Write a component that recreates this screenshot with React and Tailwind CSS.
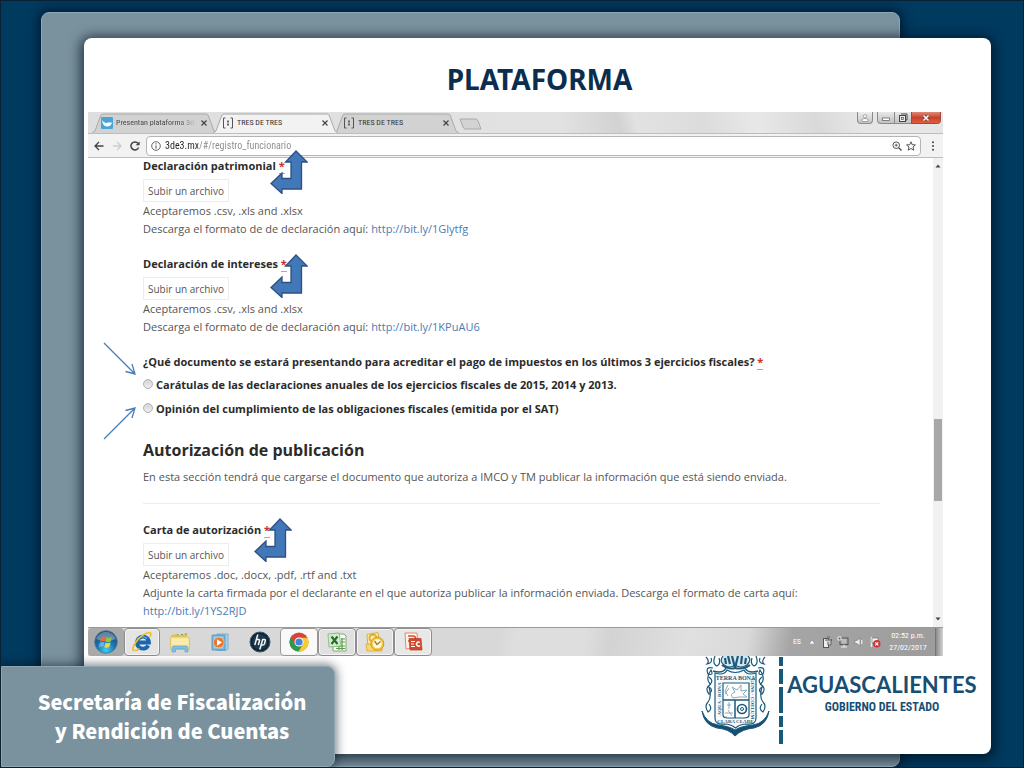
import React from "react";

const TabShape = ({ fill }) => (
  <svg className="absolute inset-0 h-full w-full" viewBox="0 0 126 20" preserveAspectRatio="none" aria-hidden="true">
    <path d="M0 20 L3 18 L9 2 L11 1 H115 L117 2 L123 18 L126 20" fill={fill} stroke="#a9a9a9" strokeWidth="1" />
  </svg>
);

const DocIcon = () => (
  <svg className="h-3 w-3 shrink-0" viewBox="0 0 12 12" fill="none" stroke="#555" aria-hidden="true">
    <path d="M3.5 1 H1.5 V11 H3.5 M8.5 1 H10.5 V11 H8.5" strokeWidth="1" />
    <path d="M6 3.5 V8.5" strokeWidth="2" stroke="#666" strokeDasharray="2 1" />
  </svg>
);

const BirdIcon = () => (
  <svg className="h-3 w-3 shrink-0" viewBox="0 0 12 12" aria-hidden="true">
    <rect width="12" height="12" rx="1" fill="#49a5d6" />
    <path d="M1 3 Q2.500 6 5 6 L7 5.500 L11 5.500 Q10 9.500 6 9.500 Q1.500 9 1 3Z" fill="#fff" />
  </svg>
);

function Tab({ icon, title, active, width, faded }) {
  return (
    <div className={`relative -mr-1 flex h-5 shrink-0 items-center ${width} ${active ? "z-10" : ""}`}>
      <TabShape fill={active ? "#f2f2f2" : "#d2d2d2"} />
      <button
        type="button"
        role="tab"
        aria-selected={active}
        className="relative flex min-w-0 flex-1 items-center gap-[3px] pl-[9px] text-left"
      >
        {icon}
        <span
          className={`whitespace-nowrap text-[8px] leading-3 ${
            faded
              ? "bg-[linear-gradient(90deg,#444_80%,#bbb)] bg-clip-text text-transparent"
              : "text-[#333]"
          }`}
        >
          {title}
        </span>
      </button>
      <button type="button" aria-label={`Cerrar ${title}`} className="relative mr-2 flex h-3 w-2.5 items-center justify-center">
        <svg className="h-1.5 w-1.5" viewBox="0 0 6 6" stroke="#444" strokeWidth="1.2" aria-hidden="true">
          <path d="M0.5 0.5 L5.5 5.5 M5.5 0.5 L0.5 5.5" />
        </svg>
      </button>
    </div>
  );
}

function WindowControls() {
  return (
    <div className="mr-0.5 ml-auto flex items-start">
      <button type="button" aria-label="Usuario" className="mr-1 flex h-3 w-4 items-center justify-center rounded-b-sm border border-t-0 border-[#8b8b8b] bg-gradient-to-b from-[#eee] to-[#c6c6c6]">
        <svg className="h-2 w-2" viewBox="0 0 8 8" fill="#fff" stroke="#888" strokeWidth="0.7" aria-hidden="true">
          <circle cx="4" cy="2.2" r="1.6" /><path d="M1 7.5 V5.5 L3 4.5 H5 L7 5.5 V7.5Z" />
        </svg>
      </button>
      <button type="button" aria-label="Minimizar" className="flex h-3 w-[18px] items-center justify-center rounded-bl-sm border border-t-0 border-[#8b8b8b] bg-gradient-to-b from-[#e8e8e8] to-[#c2c2c2]">
        <svg className="h-2 w-2" viewBox="0 0 8 8" aria-hidden="true"><rect x="0.5" y="4" width="7" height="2.5" fill="#fff" stroke="#555" strokeWidth="0.7" /></svg>
      </button>
      <button type="button" aria-label="Restaurar" className="flex h-3 w-4 items-center justify-center border-b border-[#8b8b8b] bg-gradient-to-b from-[#e8e8e8] to-[#c2c2c2]">
        <svg className="h-2.5 w-2.5" viewBox="0 0 10 10" fill="#eee" stroke="#444" strokeWidth="1" aria-hidden="true">
          <path d="M3 1 H9 V7 H7" /><rect x="1.5" y="2.5" width="6" height="6" /><rect x="3.5" y="4.5" width="2" height="2" fill="#fff" strokeWidth="0.7" />
        </svg>
      </button>
      <button type="button" aria-label="Cerrar" className="flex h-3 w-[30px] items-center justify-center rounded-br-sm border border-t-0 border-[#a04a3b] bg-gradient-to-b from-[#dc8a78] via-[#c9412a] to-[#de5e41]">
        <svg className="h-2 w-2" viewBox="0 0 8 8" aria-hidden="true">
          <path d="M1.5 1.5 L6.5 6.5 M6.5 1.5 L1.5 6.5" stroke="#6b2a20" strokeWidth="2.8" /><path d="M1.5 1.5 L6.5 6.5 M6.5 1.5 L1.5 6.5" stroke="#fff" strokeWidth="1.7" />
        </svg>
      </button>
    </div>
  );
}

function Toolbar() {
  return (
    <div className="flex h-[25px] items-center border-y border-[#bdbdbd] bg-[#f2f2f2] pr-1.5 pl-1.5">
      <button type="button" aria-label="Atrás" className="mr-2">
        <svg className="h-2.5 w-2.5" viewBox="0 0 10 10" fill="none" stroke="#444" strokeWidth="1.3" aria-hidden="true"><path d="M9.5 5 H1 M5 1 L1 5 L5 9" /></svg>
      </button>
      <button type="button" aria-label="Adelante" className="mr-2">
        <svg className="h-2.5 w-2.5" viewBox="0 0 10 10" fill="none" stroke="#cdcdcd" strokeWidth="1.3" aria-hidden="true"><path d="M1 5 H9 M5 1 L9 5 L5 9" /></svg>
      </button>
      <button type="button" aria-label="Recargar" className="mr-1.5">
        <svg className="h-2.5 w-2.5" viewBox="0 0 10 10" fill="none" stroke="#444" strokeWidth="1.5" aria-hidden="true"><path d="M8.6 6.5 A4 4 0 1 1 8 2.3" /><path d="M9.6 0.4 V4.3 H5.6Z" fill="#444" stroke="none" /></svg>
      </button>
      <div className="flex h-5 flex-1 items-center gap-1 rounded-sm border border-[#b5b5b5] bg-white px-1">
        <svg className="h-2.5 w-2.5" viewBox="0 0 10 10" fill="none" stroke="#555" aria-hidden="true"><circle cx="5" cy="5" r="4.3" strokeWidth="0.9" /><path d="M5 4.4 V7.6 M5 2.3 V3.4" strokeWidth="1.1" /></svg>
        <input
          aria-label="Dirección"
          defaultValue="3de3.mx/#/registro_funcionario"
          className="min-w-0 flex-1 bg-[linear-gradient(90deg,#222_33px,#8a8a8a_33px)] bg-clip-text text-[10px] leading-4 text-transparent outline-none"
        />
        <svg className="h-2.5 w-2.5" viewBox="0 0 10 10" fill="none" stroke="#555" aria-hidden="true"><circle cx="4.2" cy="4.2" r="3.3" /><path d="M6.7 6.7 L9.5 9.5" strokeWidth="1.4" /><path d="M4.2 2.7 V5.7 M2.7 4.2 H5.7" strokeWidth="0.9" /></svg>
        <button type="button" aria-label="Añadir a favoritos">
          <svg className="h-2.5 w-2.5" viewBox="0 0 10 10" fill="none" stroke="#444" strokeWidth="0.9" aria-hidden="true"><path d="M5 0.8 L6.2 3.7 L9.4 3.9 L7 6 L7.8 9.2 L5 7.5 L2.2 9.2 L3 6 L0.6 3.9 L3.8 3.7Z" /></svg>
        </button>
      </div>
      <button type="button" aria-label="Menú" className="ml-2 flex w-2 justify-center">
        <svg className="h-2.5 w-1" viewBox="0 0 4 10" fill="#444" aria-hidden="true"><circle cx="2" cy="1.2" r="1" /><circle cx="2" cy="5" r="1" /><circle cx="2" cy="8.8" r="1" /></svg>
      </button>
    </div>
  );
}

const BentArrow = ({ place }) => (
  <svg className={`pointer-events-none absolute z-20 h-[44px] w-[38px] ${place}`} viewBox="0 0 38 44" aria-hidden="true">
    <path d="M26 1 L37 12 H31.5 V39 H12 V43.5 L1 33.5 L12 23 V28.5 H21 V12 H15.5Z" fill="#4178b8" stroke="#2f4f80" strokeWidth="1.3" />
  </svg>
);

const Required = () => (
  <abbr title="requerido" className="border-b border-dashed border-[#b9a3a3] font-bold text-[#c9302c] no-underline">*</abbr>
);

function FileField({ id, label, arrow, children }) {
  return (
    <div className="relative">
      <label htmlFor={id} className="block font-bold leading-4 text-[#2b2b2b]">
        {label} <Required />
      </label>
      <BentArrow place={arrow} />
      <button id={id} type="button" className="mt-[5px] block h-[23px] border border-[#ededed] bg-white px-1 text-[10px] text-[#555]">
        Subir un archivo
      </button>
      {children}
    </div>
  );
}

const Link = ({ href }) => <a href={href} className="text-[#4a7cb3]">{href}</a>;

function Choice({ children }) {
  return (
    <label className="flex h-6 items-center gap-[3px] font-bold text-[#2b2b2b]">
      <input type="radio" name="documento" className="mb-0.5 h-2.5 w-2.5 appearance-none rounded-full border border-[#b2b2b2] bg-gradient-to-b from-[#d4d4d4] to-[#eee] checked:border-4" />
      {children}
    </label>
  );
}

function Form() {
  return (
    <form className="min-w-0 flex-1 pr-[53px] pb-[7px] pl-[55px] text-[11px] leading-[18px] text-[#555]">
      <div className="flex flex-col gap-[18px]">
        <FileField id="patrimonial" label="Declaración patrimonial" arrow="left-[127px] -top-2">
          <p>Aceptaremos .csv, .xls and .xlsx</p>
          <p>Descarga el formato de de declaración aquí: <Link href="http://bit.ly/1Glytfg" /></p>
        </FileField>
        <FileField id="intereses" label="Declaración de intereses" arrow="left-[127px] -top-0.5">
          <p>Aceptaremos .csv, .xls and .xlsx</p>
          <p>Descarga el formato de de declaración aquí: <Link href="http://bit.ly/1KPuAU6" /></p>
        </FileField>
        <fieldset className="relative">
          <legend className="mb-[3px] font-bold leading-4 text-[#2b2b2b]">
            ¿Qué documento se estará presentando para acreditar el pago de impuestos en los últimos 3 ejercicios fiscales? <Required />
          </legend>
          <Choice>Carátulas de las declaraciones anuales de los ejercicios fiscales de 2015, 2014 y 2013.</Choice>
          <Choice>Opinión del cumplimiento de las obligaciones fiscales (emitida por el SAT)</Choice>
          <svg className="pointer-events-none absolute -top-8 -left-10 h-[100px] w-[36px]" viewBox="0 0 36 100" fill="none" stroke="#4a7ebb" strokeWidth="1.3" aria-hidden="true">
            <path d="M1 2 L32 33 M22.500 30.500 L32 33 L29 23 M1 98 L32 67 M22.500 69.500 L32 67 L29 77" />
          </svg>
        </fieldset>
      </div>
      <h2 className="mt-[15px] text-[16px] leading-7 font-bold text-[#2b2b2b]">Autorización de publicación</h2>
      <p className="mt-1">
        En esta sección tendrá que cargarse el documento que autoriza a IMCO y TM publicar la información que está siendo enviada.
      </p>
      <hr className="mt-[17px] mb-[18px] border-[#ececec]" />
      <FileField id="carta" label="Carta de autorización" arrow="left-[111px] -top-1">
        <p>Aceptaremos .doc, .docx, .pdf, .rtf and .txt</p>
        <p>Adjunte la carta firmada por el declarante en el que autoriza publicar la información enviada. Descarga el formato de carta aquí:</p>
        <p><Link href="http://bit.ly/1YS2RJD" /></p>
      </FileField>
    </form>
  );
}

function Scrollbar() {
  return (
    <div className="flex w-2.5 flex-col items-center bg-[#f1f1f1] py-1.5" aria-hidden="true">
      <svg className="h-1 w-1.5" viewBox="0 0 6 4"><path d="M0.500 3.500 L3 0.500 L5.500 3.500Z" fill="#444" /></svg>
      <div className="grow-[252]" />
      <div className="w-2 grow-[82] bg-[#a8a8a8]" />
      <div className="grow-[116]" />
      <svg className="h-1 w-1.5" viewBox="0 0 6 4"><path d="M0.500 0.500 L3 3.500 L5.500 0.500Z" fill="#444" /></svg>
    </div>
  );
}

const StartIcon = () => (
  <svg className="h-6 w-6" viewBox="0 0 24 24" aria-hidden="true">
    <defs>
      <radialGradient id="orb" cx="50%" cy="85%" r="80%"><stop offset="0" stopColor="#39d0f4" /><stop offset="0.5" stopColor="#1f73ad" /><stop offset="1" stopColor="#1b466f" /></radialGradient>
    </defs>
    <circle cx="12" cy="12" r="11.300" fill="url(#orb)" stroke="#47779b" strokeWidth="0.800" />
    <path d="M2 9 Q5 2 12 1.800 Q19 2 22 9 Q12 13 2 9Z" fill="#fff" opacity="0.300" />
    <path d="M7 7.500 Q9 5.800 11.700 7 L10.700 11.400 Q8 10.400 6 12Z" fill="#ee6a35" />
    <path d="M12.600 7.400 Q15 8.500 17.800 7 L16.700 11.500 Q14 13 11.600 11.800Z" fill="#93c83e" />
    <path d="M5.800 13 Q8 11.500 10.500 12.400 L9.400 16.800 Q7 16 4.800 17.400Z" fill="#5bb9e7" />
    <path d="M11.400 12.800 Q14 14 16.500 12.600 L15.400 17 Q12.500 18.500 10.300 17.200Z" fill="#fbd045" />
  </svg>
);
const IeIcon = () => (
  <svg className="h-[22px] w-[22px]" viewBox="0 0 22 22" fill="none" aria-hidden="true">
    <path d="M17.300 14.500 A6 6 0 1 1 18 11.500 H6" stroke="#1a67ad" strokeWidth="3.800" />
    <path d="M6 9.500 A5.800 5 0 0 1 16 7.500" stroke="#5db7e8" strokeWidth="1.200" />
    <path d="M3.500 19.500 Q-0.500 19 5 11 Q11 3 18 1.500 Q21.500 1.500 18.500 6" stroke="#f0bd2b" strokeWidth="1.700" />
    <path d="M3.500 19.500 Q6 20 8.500 17.500" stroke="#f0bd2b" strokeWidth="1.500" />
  </svg>
);
const FolderIcon = () => (
  <svg className="h-[22px] w-[22px]" viewBox="0 0 22 22" aria-hidden="true">
    <path d="M2 4 L8 2.500 L9 4.500 L18 2.500 V6 L20.500 6.500 V18 H2Z" fill="#e1c45f" />
    <path d="M8 4 H10 M12 3.500 H14 M16 3 H18" stroke="#67a85a" strokeWidth="1.200" />
    <path d="M1.500 6 H19 L20.500 8 V18.500 H1.500Z" fill="#f8e69b" stroke="#d7bd5d" strokeWidth="0.700" />
    <path d="M3 9 H19 M3 12 H19" stroke="#fff4c2" />
    <path d="M3 21 V17 Q3 15 5 15 H17 Q19 15 19 17 V21 H16 V18 H6.500 V21Z" fill="#83bfdf" stroke="#5c9ec4" strokeWidth="0.600" />
  </svg>
);
const MediaIcon = () => (
  <svg className="h-5 w-5" viewBox="0 0 20 20" aria-hidden="true">
    <path d="M7 2 H18 V17 L16 18.500 H7Z" fill="#a9d2e9" stroke="#6daacc" strokeWidth="0.800" />
    <rect x="2" y="3" width="13" height="15" rx="0.500" fill="#75b5dc" stroke="#4c92bf" strokeWidth="0.800" />
    <rect x="3.500" y="4.500" width="10" height="12" fill="#9bcae5" />
    <circle cx="8.800" cy="10.500" r="5.300" fill="#ea762c" stroke="#f7c5a0" strokeWidth="0.700" />
    <path d="M7 7.300 L12 10.500 L7 13.700Z" fill="#fff" />
  </svg>
);
const HpIcon = () => (
  <svg className="h-[22px] w-[22px]" viewBox="0 0 22 22" aria-hidden="true">
    <circle cx="11" cy="11" r="10" fill="#102638" stroke="#405669" />
    <circle cx="11" cy="11" r="7.500" fill="#1e394c" />
    <path d="M8.800 3.500 L5.800 14 M7.500 8.500 H9.800 Q10.800 8.500 10.500 9.800 L9.300 14 M13.700 8.500 L10.800 18.500 M13.200 8.500 H15.500 Q16.600 8.500 16.200 10 L15.400 13 Q15 14 13.700 14 H12.200" fill="none" stroke="#f2f5f7" strokeWidth="1.500" />
  </svg>
);
const ChromeIcon = () => (
  <svg className="h-5 w-5" viewBox="0 0 20 20" aria-hidden="true">
    <circle cx="10" cy="10" r="9.500" fill="#d8443a" />
    <path d="M1.800 5.200 A9.500 9.500 0 0 0 9.500 19.500 L14 12.300 L10 14.300 L6 12.300Z" fill="#2b9950" />
    <path d="M10 5.700 H18.500 A9.500 9.500 0 0 1 9.500 19.500 L14 12.300Z" fill="#f7cc33" />
    <circle cx="10" cy="10" r="4.500" fill="#fff" /><circle cx="10" cy="10" r="3.600" fill="#4583dc" />
  </svg>
);
const ExcelIcon = () => (
  <svg className="h-5 w-5" viewBox="0 0 20 20" aria-hidden="true">
    <path d="M6 2 H17 L19 4 V19 H6Z" fill="#f6fbf4" stroke="#7fac73" />
    <path d="M9 16.500 H18 M9 14 H18 M15 6 V18 M12 13 V18 M14 7 H18 M14 10 H18" stroke="#5c9c51" strokeWidth="1.200" />
    <path d="M1 2 L12 1 L14 14 L2 15Z" fill="#d6ecd0" stroke="#72ab65" strokeWidth="0.700" />
    <path d="M4.500 4.500 L10.500 12 M10.500 4.500 L4.500 12" stroke="#22712a" strokeWidth="2.200" />
  </svg>
);
const OutlookIcon = () => (
  <svg className="h-5 w-5" viewBox="0 0 20 20" aria-hidden="true">
    <path d="M2 2.500 L13 0.500 L15 14 L3 16Z" fill="#fbe9a4" stroke="#ddb13c" />
    <circle cx="8" cy="6" r="3.500" fill="none" stroke="#e2aa22" strokeWidth="1.800" />
    <path d="M1 12 H17 V19 H2Z" fill="#f7d775" stroke="#dba72e" strokeWidth="0.800" />
    <circle cx="12.300" cy="11.700" r="6.500" fill="#f6c743" stroke="#d19b1a" /><circle cx="12.300" cy="11.700" r="4.500" fill="#fff8df" />
    <path d="M9.500 9 L12 12.500 L15.500 9.500" fill="none" stroke="#a97c1c" strokeWidth="1.300" />
  </svg>
);
const PowerpointIcon = () => (
  <svg className="h-5 w-5" viewBox="0 0 20 20" aria-hidden="true">
    <path d="M2 1 H14 L15 15 L3 17Z" fill="#fff3ed" stroke="#df8a70" />
    <path d="M5 4 H10 A2.200 2.200 0 0 1 10 9 H5" fill="none" stroke="#d65330" strokeWidth="1.500" />
    <path d="M6 6.500 H18 L19 18 H7Z" fill="#d24a2b" stroke="#b53a20" strokeWidth="0.700" />
    <path d="M8 9.500 H12 M8 12 H11 M8 14.500 H12" fill="none" stroke="#fff" strokeWidth="1.200" />
    <path d="M16.800 10.500 A2 2 0 1 0 17 13.500" fill="none" stroke="#fff" strokeWidth="1.500" />
  </svg>
);

const apps = [
  { name: "Inicio", icon: <StartIcon />, width: "w-9", look: "bg-[#aaa]" },
  { name: "Internet Explorer", icon: <IeIcon />, width: "w-9", look: "border border-[#8e8e8e] bg-[#e4e4e4] shadow-[inset_0_0_0_1px_#f4f4f4]" },
  { name: "Explorador de archivos", icon: <FolderIcon />, width: "w-10", look: "" },
  { name: "Reproductor multimedia", icon: <MediaIcon />, width: "w-10", look: "" },
  { name: "HP", icon: <HpIcon />, width: "w-10", look: "" },
  { name: "Chrome", icon: <ChromeIcon />, width: "w-[38px]", look: "border border-[#999] bg-[#f9f9f9]" },
  { name: "Excel", icon: <ExcelIcon />, width: "w-[38px]", look: "border border-[#8e8e8e] bg-[#e0e0e0] shadow-[inset_0_0_0_1px_#f4f4f4]" },
  { name: "Outlook", icon: <OutlookIcon />, width: "w-[38px]", look: "border border-[#8e8e8e] bg-[#e0e0e0] shadow-[inset_0_0_0_1px_#f4f4f4]" },
  { name: "PowerPoint", icon: <PowerpointIcon />, width: "w-[38px]", look: "border border-[#8e8e8e] bg-[#e8e8e8] shadow-[inset_0_0_0_1px_#f4f4f4]" },
];

function Taskbar() {
  return (
    <div className="flex h-[29px] items-stretch border-t border-[#999] bg-[linear-gradient(100deg,#d8d8d8_0%,#d8d8d8_48%,#dedede_50%,#dedede_58%,#d3d3d3_61%,#dadada_66%,#e0e0e0_70%,#d9d9d9_77%,#a5a5a5_82%,#9c9c9c_100%)]">
      {apps.map((app) => (
        <button key={app.name} type="button" aria-label={app.name} className={`flex shrink-0 items-center justify-center rounded-sm ${app.width} ${app.look}`}>
          {app.icon}
        </button>
      ))}
      <div className="ml-auto flex items-center font-['Roboto_Condensed','Roboto',sans-serif] text-[8px] leading-3 text-white">
        <span className="mr-2">ES</span>
        <svg className="mr-1.5 h-1 w-1.5" viewBox="0 0 6 4" aria-hidden="true"><path d="M0 4 L3 0 L6 4Z" fill="#fff" stroke="#777" strokeWidth="0.500" /></svg>
        <svg className="mr-1 h-3 w-3" viewBox="0 0 12 12" aria-hidden="true"><rect x="2.500" y="2.500" width="5" height="9" fill="#eee" stroke="#555" /><path d="M4 4 H10 V9 H8 M6 1 H9 M7 6 V9 M10.500 3 V5" stroke="#666" fill="#ccc" /></svg>
        <svg className="mr-1 h-3 w-3" viewBox="0 0 12 12" aria-hidden="true"><rect x="3" y="2" width="8" height="6.500" fill="#aaa" stroke="#555" /><path d="M1 1 H4 V4 H1Z M4 11 H10 M7 8.500 V11" stroke="#eee" fill="#666" /><path d="M5 4 H9 M5 6 H9" stroke="#ddd" strokeWidth="0.800" /></svg>
        <svg className="mr-1 h-3 w-3" viewBox="0 0 12 12" fill="none" stroke="#fff" aria-hidden="true"><path d="M2 4.500 H4 L7 2 V10 L4 7.500 H2Z" fill="#eee" stroke="#777" strokeWidth="0.600" /><path d="M8.500 4 Q9.500 6 8.500 8" /></svg>
        <svg className="h-3 w-3" viewBox="0 0 12 12" aria-hidden="true"><path d="M2.500 1 V11" stroke="#eee" strokeWidth="1.500" /><path d="M3 2 H9 V7 H3Z" fill="#f5f5f5" stroke="#666" strokeWidth="0.600" /><circle cx="7.800" cy="7.800" r="3.700" fill="#cf3336" /><path d="M6.300 6.300 L9.300 9.300 M9.300 6.300 L6.300 9.300" stroke="#fff" strokeWidth="1.200" /></svg>
        <div className="w-[54px] text-center">
          <div>02:52 p.m.</div>
          <div>27/02/2017</div>
        </div>
        <button type="button" aria-label="Mostrar escritorio" className="h-full w-2 border-l border-[#777] bg-gradient-to-r from-[#8b8b8b] to-[#d5d5d5]" />
      </div>
    </div>
  );
}

function Browser() {
  return (
    <section className="mr-12 ml-1 font-['Open_Sans','Noto_Sans',sans-serif]">
      <div className="font-['Roboto_Condensed','Roboto',sans-serif]">
        <div className="flex h-[21px] items-start bg-[linear-gradient(75deg,#dedede_0%,#e2e2e2_55%,#d2d2d2_62%,#e2e2e2_64%,#dcdcdc_72%,#e8e8e8_78%,#d9d9d9_85%,#e6e6e6_90%)] pl-1">
          <div role="tablist" className="flex items-start pt-px">
            <Tab icon={<BirdIcon />} title="Presentan plataforma 3d" width="w-[125px]" faded />
            <Tab icon={<DocIcon />} title="TRES DE TRES" width="w-[125px]" active />
            <Tab icon={<DocIcon />} title="TRES DE TRES" width="w-[125px]" />
          </div>
          <button type="button" aria-label="Nueva pestaña" className="mt-1.5 ml-1">
            <svg className="h-3 w-[23px]" viewBox="0 0 23 12" aria-hidden="true"><path d="M1 1 H17 Q18 1 19 3 L22 11 H6 Q5 11 4 9Z" fill="#d3d3d3" stroke="#aaa" /></svg>
          </button>
          <WindowControls />
        </div>
        <Toolbar />
      </div>
      <div className="flex bg-white">
        <Form />
        <Scrollbar />
      </div>
      <Taskbar />
    </section>
  );
}

const Crest = () => (
  <svg className="h-[82px] w-[70px]" viewBox="0 0 70 82" fill="none" stroke="#1c5a7c" strokeWidth="1" role="img" aria-label="Escudo de Aguascalientes">
    <g strokeWidth="1.200">
      <path d="M22 0 Q18 5 23 9 Q29 13 34 9 Q40 13 46 9 Q51 4 47 0" fill="#d9e7ee" />
      <path d="M27 0 L29 8 M31 0 L34 12 L37 0 M41 0 L40 8 M24 2 L25 8 M45 2 L44 8" strokeWidth="2.200" />
      <path d="M21 9 Q28 14 34 12 Q42 14 49 9" strokeWidth="2" />
      <path d="M5 1 Q9 5 6 8 Q12 7 10 2 M14 0 Q11 8 16 10 Q20 8 18 2 M64 1 Q60 5 63 8 Q57 7 59 2 M55 0 Q58 8 53 10 Q49 8 51 2" />
      <path d="M12 12 Q4 10 7 18 Q13 20 10 14 Q4 22 9 28 Q13 25 8 21 M57 12 Q65 10 62 18 Q56 20 59 14 Q65 22 60 28 Q56 25 61 21" />
      <path d="M10 28 Q3 32 8 38 Q13 34 8 31 Q11 41 7 46 Q3 50 7 56 Q12 53 8 48 M59 28 Q66 32 61 38 Q56 34 61 31 Q58 41 62 46 Q66 50 62 56 Q57 53 61 48" />
    </g>
    <path d="M14 17 Q23 20 26 14 Q34 19 43 14 Q46 20 55 17 V62 Q55 69 46 68 Q39 68 34.500 72 Q30 68 23 68 Q14 69 14 62Z" fill="#f6fafb" strokeWidth="1.200" />
    <path d="M12 15 Q22 18 25 12 M57 15 Q47 18 44 12" strokeWidth="1.500" />
    <path d="M22 27 H48 V59 Q48 62 43 62 H27 Q22 62 22 59Z" fill="#fff" strokeWidth="1.200" />
    <path d="M22 44 H48 M34 44 V62" strokeWidth="1.500" />
    <path d="M27 29 L24 35 L27 40 M28 32 L24 38 M32 42 Q28 38 34 36 L31 31 L36 34 L40 29 L40 35 L46 34 L42 38 L46 41 L38 41 Z M24 57 H32 M27 54 L31 60 M25 60 V62 M28 46 V53 M26 49 H30" stroke="#7fa0b0" strokeWidth="0.900" />
    <circle cx="41" cy="53" r="4.500" strokeWidth="1.700" /><circle cx="41" cy="53" r="1.500" />
    <g fill="#1c5a7c" stroke="none" fontFamily="Liberation Serif, serif" fontSize="6" fontWeight="bold" textAnchor="middle">
      <text x="34.500" y="24">TERRA BONA</text>
      <text x="34.500" y="67" fontSize="5">CLARA CLARE</text>
      <text transform="translate(19.500 43) rotate(-90)" fontSize="5">AQUA · BONA</text>
      <text transform="translate(50 43) rotate(90)" fontSize="5">GENS · COELUM</text>
    </g>
    <path d="M1 55 Q3 69 16 72 Q28 73 34 80 Q41 73 53 72 Q66 69 68 55 Q64 67 52 69 Q40 70 34 74 Q28 70 17 69 Q5 67 1 55Z" fill="#174f73" />
  </svg>
);

function StateLogo() {
  return (
    <footer className="flex h-[97px] items-start justify-end pr-[14px]">
      <Crest />
      <svg className="mr-1 ml-2 h-[88px] w-1" viewBox="0 0 4 88" fill="#17597d" aria-hidden="true">
        <rect y="1" width="4" height="9" /><rect y="13" width="4" height="15" /><rect y="31" width="4" height="26" /><rect y="60" width="4" height="11" /><rect y="74" width="4" height="14" />
      </svg>
      <div className="w-[190px] pt-[17px] text-center whitespace-nowrap text-[#174f73]">
        <div className="font-['Lato',sans-serif] text-[22px] leading-6 font-bold">AGUASCALIENTES</div>
        <div className="font-['Roboto_Condensed','Roboto',sans-serif] text-[12px] leading-5 font-bold">GOBIERNO DEL ESTADO</div>
      </div>
    </footer>
  );
}

export default function App() {
  return (
    <main className="relative flex min-h-screen overflow-hidden border border-[#0a2033] bg-[#003a5f]">
      <div className="absolute top-[11px] right-[123px] bottom-0 left-10 rounded-lg border border-[#8fa8b5] bg-[#7a929e] shadow-[0_0_12px_2px_rgba(0,10,25,0.7)]" />
      <article className="relative mt-[37px] mr-8 mb-[13px] ml-[83px] min-w-0 flex-1 rounded-lg bg-white shadow-[0_2px_12px_4px_rgba(0,15,30,0.65)]">
        <h1 className="mb-3.5 pt-[22px] pl-1 text-center font-['Noto_Sans',sans-serif] text-[28px] leading-[38px] font-bold text-[#0b2e4f]">
          PLATAFORMA
        </h1>
        <Browser />
        <StateLogo />
      </article>
      <aside className="absolute bottom-0 left-0 flex h-[101px] w-[334px] items-center justify-center rounded-tr-lg rounded-br-lg border border-[#91a6b1] bg-[#7a929e] pb-0.5 pl-2 text-center font-['Noto_Sans_CJK_SC','Noto_Sans',sans-serif] text-[20px] leading-[29px] font-black text-white shadow-[0_0_10px_2px_rgba(0,15,30,0.5)]">
        <p>
          Secretaría de Fiscalización
          <br />y Rendición de Cuentas
        </p>
      </aside>
    </main>
  );
}
